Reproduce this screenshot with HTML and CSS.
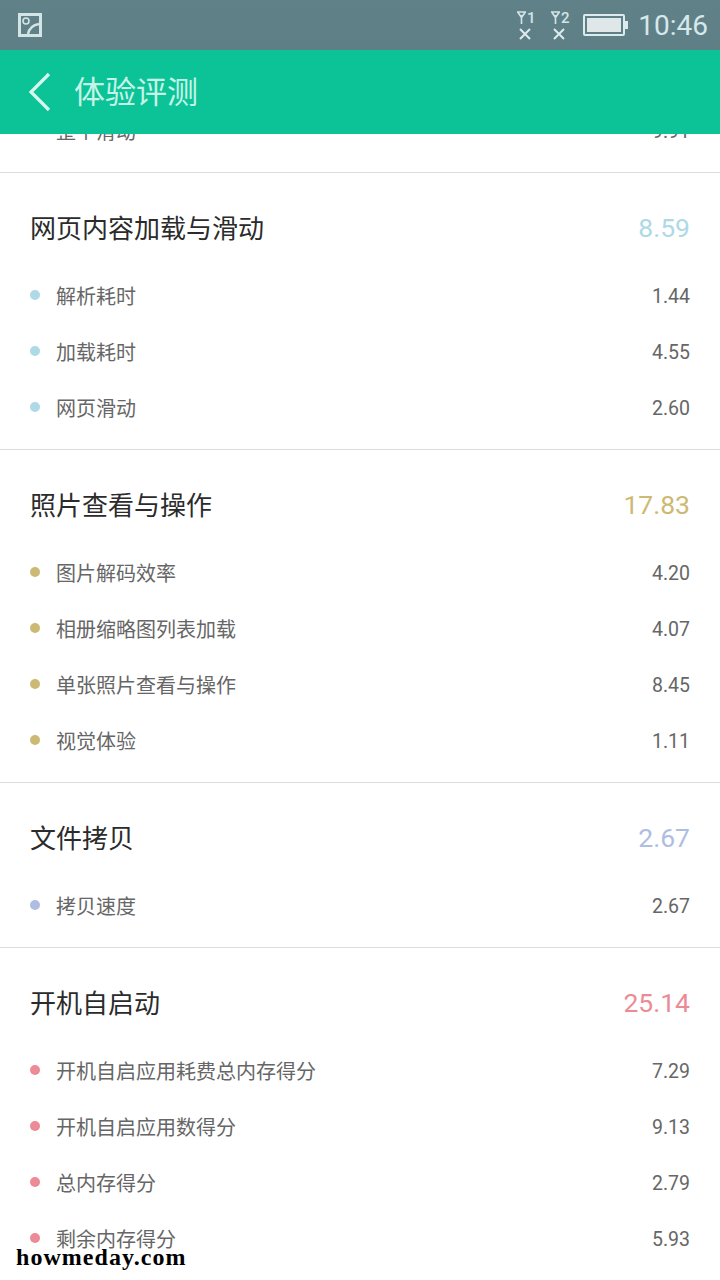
FILE: index.html
```html
<!DOCTYPE html>
<html lang="zh-CN">
<head>
    <meta charset="UTF-8">
    <meta name="viewport" content="width=device-width, initial-scale=1.0">
    <title>体验评测</title>
    <link rel="stylesheet" href="styles.css">
</head>
<body>
    <div class="page">
        <div class="header">
            <div class="status-bar">
                <svg class="pic-icon" width="24" height="24" viewBox="0 0 24 24">
                    <rect x="1.5" y="1.5" width="21" height="21" fill="none" stroke="#d3e4e6" stroke-width="3"/>
                    <circle cx="8" cy="8" r="3" fill="none" stroke="#d3e4e6" stroke-width="1.6"/>
                    <path d="M10 21 C11 16 15 12 21 11" fill="none" stroke="#d3e4e6" stroke-width="2.4"/>
                </svg>
                <div class="status-right">
                    <div class="sim">
                        <div class="sim-top">
                            <svg width="9" height="13" viewBox="0 0 9 13"><path d="M0.7 1h7.6L4.5 6.5zM4.5 4v9" fill="none" stroke="#d3e4e6" stroke-width="1.6"/></svg>
                            <span>1</span>
                        </div>
                        <svg class="sim-x" width="12" height="12" viewBox="0 0 12 12"><path d="M1 1l10 10M11 1L1 11" stroke="#dcebed" stroke-width="2"/></svg>
                    </div>
                    <div class="sim sim-last">
                        <div class="sim-top">
                            <svg width="9" height="13" viewBox="0 0 9 13"><path d="M0.7 1h7.6L4.5 6.5zM4.5 4v9" fill="none" stroke="#d3e4e6" stroke-width="1.6"/></svg>
                            <span>2</span>
                        </div>
                        <svg class="sim-x" width="12" height="12" viewBox="0 0 12 12"><path d="M1 1l10 10M11 1L1 11" stroke="#dcebed" stroke-width="2"/></svg>
                    </div>
                    <div class="battery"><div class="battery-fill"></div></div>
                    <div class="time">10:46</div>
                </div>
            </div>
            <div class="app-bar">
                <svg class="back" width="24" height="40" viewBox="0 0 24 40">
                    <path d="M21 2L3 20l18 18" fill="none" stroke="#d6f6ee" stroke-width="3.2"/>
                </svg>
                <div class="app-title">体验评测</div>
            </div>
        </div>

        <div class="list">
            <div class="section section-cut">
                <div class="row">
                    <span class="row-name">整个滑动</span>
                    <span class="row-value">9.91</span>
                </div>
            </div>

            <div class="section">
                <div class="section-head">
                    <span class="section-name">网页内容加载与滑动</span>
                    <span class="section-score blue">8.59</span>
                </div>
                <div class="row"><i class="dot bg-blue"></i><span class="row-name">解析耗时</span><span class="row-value">1.44</span></div>
                <div class="row"><i class="dot bg-blue"></i><span class="row-name">加载耗时</span><span class="row-value">4.55</span></div>
                <div class="row"><i class="dot bg-blue"></i><span class="row-name">网页滑动</span><span class="row-value">2.60</span></div>
            </div>

            <div class="section">
                <div class="section-head">
                    <span class="section-name">照片查看与操作</span>
                    <span class="section-score gold">17.83</span>
                </div>
                <div class="row"><i class="dot bg-gold"></i><span class="row-name">图片解码效率</span><span class="row-value">4.20</span></div>
                <div class="row"><i class="dot bg-gold"></i><span class="row-name">相册缩略图列表加载</span><span class="row-value">4.07</span></div>
                <div class="row"><i class="dot bg-gold"></i><span class="row-name">单张照片查看与操作</span><span class="row-value">8.45</span></div>
                <div class="row"><i class="dot bg-gold"></i><span class="row-name">视觉体验</span><span class="row-value">1.11</span></div>
            </div>

            <div class="section">
                <div class="section-head">
                    <span class="section-name">文件拷贝</span>
                    <span class="section-score periwinkle">2.67</span>
                </div>
                <div class="row"><i class="dot bg-periwinkle"></i><span class="row-name">拷贝速度</span><span class="row-value">2.67</span></div>
            </div>

            <div class="section">
                <div class="section-head">
                    <span class="section-name">开机自启动</span>
                    <span class="section-score pink">25.14</span>
                </div>
                <div class="row"><i class="dot bg-pink"></i><span class="row-name">开机自启应用耗费总内存得分</span><span class="row-value">7.29</span></div>
                <div class="row"><i class="dot bg-pink"></i><span class="row-name">开机自启应用数得分</span><span class="row-value">9.13</span></div>
                <div class="row"><i class="dot bg-pink"></i><span class="row-name">总内存得分</span><span class="row-value">2.79</span></div>
                <div class="row"><i class="dot bg-pink"></i><span class="row-name">剩余内存得分</span><span class="row-value">5.93</span></div>
            </div>
        </div>

        <div class="watermark">howmeday.com</div>
    </div>
</body>
</html>
```

FILE: styles.css
```css
/* General styles */
body {
    margin: 0;
    background: #fff;
    font-family: Roboto, "Noto Sans CJK SC", sans-serif;
    color: #2b2b2b;
}
.page {
    position: relative;
    width: 720px;
    height: 1280px;
    overflow: hidden;
}

/* Header */
.header {
    position: relative;
    z-index: 2;
}
.status-bar {
    height: 50px;
    box-sizing: border-box;
    padding: 0 12px 0 18px;
    background: linear-gradient(#618189, #5f7f87);
    display: flex;
    align-items: center;
    justify-content: space-between;
}
.status-right {
    display: flex;
    align-items: center;
}
.sim {
    width: 18px;
    margin-right: 16px;
    display: flex;
    flex-direction: column;
    align-items: center;
    gap: 3px;
}
.sim-last {
    margin-right: 14px;
}
.sim-x {
    margin-right: 2px;
}
.sim-top {
    height: 14px;
    display: flex;
    align-items: center;
    gap: 1px;
    font-size: 15px;
    font-weight: 500;
    color: #d3e4e6;
}
.battery {
    position: relative;
    width: 42px;
    height: 22px;
    box-sizing: border-box;
    margin-right: 13px;
    border: 2px solid #dcebed;
    border-radius: 2px;
    padding: 2px;
}
.battery::after {
    content: "";
    position: absolute;
    right: -5px;
    top: 5px;
    width: 3px;
    height: 8px;
    background: #dcebed;
}
.battery-fill {
    height: 100%;
    background: #dfe7e8;
}
.time {
    font-size: 28px;
    color: #d6e8ea;
}
.app-bar {
    height: 84px;
    box-sizing: border-box;
    padding-left: 28px;
    background: #0cc397;
    display: flex;
    align-items: center;
    gap: 22px;
}
.app-title {
    margin-top: -6px;
    font-size: 31px;
    color: #c6f3e8;
}

/* List */
.list {
    margin-top: -31px;
}
.section {
    padding-bottom: 13px;
    border-bottom: 1px solid #dcdcdc;
}
.section-head {
    height: 95px;
    box-sizing: border-box;
    padding: 41px 30px 0;
    line-height: 30px;
    display: flex;
    justify-content: space-between;
}
.section-name {
    font-size: 26px;
}
.section-score {
    margin-top: -1px;
    font-size: 26.5px;
}
.row {
    height: 56px;
    padding: 0 30px;
    display: flex;
    align-items: center;
    font-size: 20px;
    color: #666;
}
.section-cut .row {
    padding-left: 56px;
}
.row-name {
    margin-top: -2px;
}
.row-value {
    margin-left: auto;
    font-size: 19.5px;
}
.dot {
    width: 10px;
    height: 10px;
    margin: -2px 16px 0 0;
    border-radius: 50%;
}

/* Category colours */
.blue { color: #aed9e6; }
.gold { color: #cdb973; }
.periwinkle { color: #aebde2; }
.pink { color: #ec8b96; }
.bg-blue { background: #aed9e6; }
.bg-gold { background: #cdb973; }
.bg-periwinkle { background: #aebde2; }
.bg-pink { background: #ec8b96; }

.watermark {
    position: absolute;
    left: 16px;
    top: 1244px;
    font-family: "Liberation Serif", serif;
    font-size: 24px;
    font-weight: bold;
    color: #000;
    letter-spacing: 1.05px;
    text-shadow: 1px 1px 0 #fff, -1px -1px 0 #fff, 1px -1px 0 #fff, -1px 1px 0 #fff;
}
```
